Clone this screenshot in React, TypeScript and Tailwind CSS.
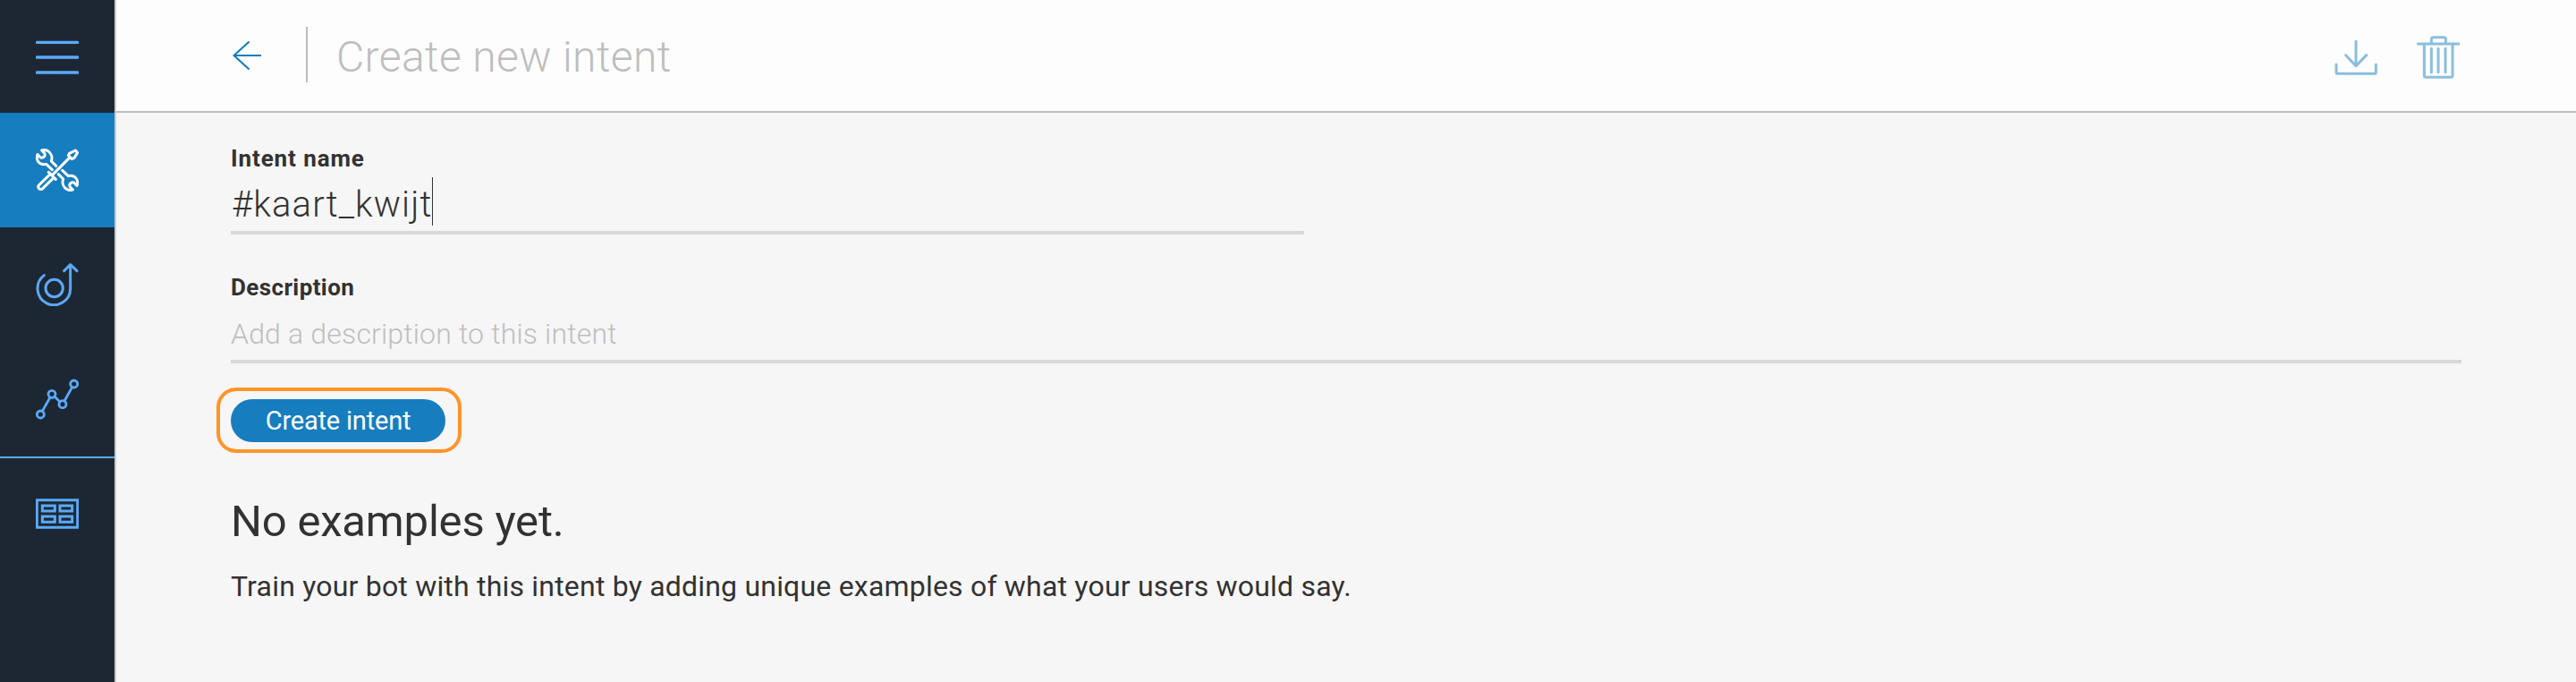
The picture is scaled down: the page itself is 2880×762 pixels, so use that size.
import type { ReactNode } from "react";

function Icon({ viewBox, width = 9, children }: { viewBox: string; width?: number; children: ReactNode }) {
  return (
    <svg
      className="size-12 shrink-0"
      viewBox={viewBox}
      fill="none"
      stroke="currentColor"
      strokeWidth={width}
      strokeLinecap="round"
      strokeLinejoin="round"
    >
      {children}
    </svg>
  );
}

const wrench =
  "M98 88L82 72C87 58 81 44 69 37Q60 33 50 36L59 46Q62 51 59 56Q54 62 46 60L36 50C31 60 34 73 45 80Q54 85 65 82L85 101";

const MenuIcon = () => (
  <Icon viewBox="0 0 144 144" width={10}>
    <path d="M4 22H140M4 72H140M4 123H140" />
  </Icon>
);

const ToolsIcon = () => (
  <Icon viewBox="30 30 144 144">
    <path d={wrench} />
    <path d={wrench} transform="rotate(180 102 102)" />
    <path d="M163 36L170 44L159 61L151 65L139 53L143 46ZM145 59L86 118M73 109L97 133" />
    <path d="M79 115L42 151C33 160 43 171 53 164L90 128" />
  </Icon>
);

const TargetIcon = () => (
  <Icon viewBox="120 132 144 144">
    <circle cx="182" cy="216" r="29" />
    <path d="M148 173A55 55 0 1 0 236 216V138M215 158L236 137L258 158" />
  </Icon>
);

const AnalyticsIcon = () => (
  <Icon viewBox="120 516 144 144" width={8.5}>
    <circle cx="136" cy="639" r="12" />
    <circle cx="174" cy="571" r="12" />
    <circle cx="210" cy="605" r="12" />
    <circle cx="248" cy="537" r="12" />
    <path d="M142 628L168 582M183 579L201 597M216 594L242 548" />
  </Icon>
);

const TableIcon = () => (
  <Icon viewBox="120 150 144 144">
    <g strokeLinejoin="miter">
      <path d="M124 176H260V268H124ZM142 195H184V213H142ZM201 195H242V213H201ZM142 231H184V250H142ZM201 231H242V250H201Z" />
    </g>
  </Icon>
);

const DownloadIcon = () => (
  <Icon viewBox="90 120 144 144">
    <path d="M162 139V221M128 185L162 221L197 185M96 216V242Q96 247 101 247H224Q229 247 229 242V216" />
  </Icon>
);

const TrashIcon = () => (
  <Icon viewBox="366 120 144 144">
    <path d="M370 147H507M415 147V131Q415 125 421 125H457Q463 125 463 131V147M391 147V253Q391 259 397 259H480Q486 259 486 253V147" />
    <path d="M415 163V242M438 163V242M462 163V242" />
  </Icon>
);

export default function App() {
  return (
    <div className="flex h-[762px] w-full overflow-hidden bg-[#f6f6f6] font-[Roboto,sans-serif] text-[#323232]">
      <nav className="flex w-[130px] shrink-0 flex-col border-r-2 border-[#cccccc] bg-[#1d2733] text-[#5aaafa]">
        <button className="flex h-[126px] justify-center pt-10">
          <MenuIcon />
        </button>
        <a className="flex h-32 items-center justify-center bg-[#167dbf] text-white">
          <ToolsIcon />
        </a>
        <a className="flex h-32 items-center justify-center">
          <TargetIcon />
        </a>
        <a className="flex h-32 items-center justify-center">
          <AnalyticsIcon />
        </a>
        <a className="flex h-32 justify-center border-t-2 border-[#5aaafa] pt-[38px]">
          <TableIcon />
        </a>
      </nav>

      <div className="flex min-w-0 flex-1 flex-col">
        <header className="flex h-[126px] shrink-0 items-start border-b-2 border-[#bdbdbd] bg-[#fdfdfd] pr-[130px] pl-[130px]">
          <svg className="mt-[45px] h-[34px] w-[34px] text-[#167dbf]" viewBox="0 0 34 34" fill="none" stroke="currentColor" strokeWidth="2.2">
            <path d="M32 17H1.5M18.6 1.5L1.5 17L18.6 32.5" />
          </svg>
          <div className="mt-[30px] ml-12 h-[62px] w-0.5 bg-[#bdbdbd]" />
          <h1 className="mt-10 ml-8 text-[48px] leading-[48px] font-[330] tracking-[0.4px] whitespace-nowrap text-[#bebebe]">
            Create new intent
          </h1>
          <div className="mt-10 ml-auto flex gap-11 text-[#8abedf]">
            <DownloadIcon />
            <TrashIcon />
          </div>
        </header>

        <main className="flex flex-col items-start pt-9 pr-32 pl-32">
          <label className="text-[26px] leading-[30px] font-bold tracking-[0.9px]">Intent name</label>
          <div className="flex h-[70px] w-[1200px] border-b-4 border-[#d8d8d8] pt-1.5">
            <span className="mt-1 ml-px text-[40px] leading-[54px] font-[330] tracking-[1.1px]">#kaart_kwijt</span>
            <span className="h-[54px] w-px bg-[#323232]" />
          </div>

          <label className="mt-11 text-[26px] leading-[30px] font-bold tracking-[0.4px]">Description</label>
          <div className="h-[70px] w-full border-b-4 border-[#d8d8d8] pt-[17px] text-[32px] leading-10 font-[340] tracking-[0.17px] text-[#bebebe]">
            Add a description to this intent
          </div>

          <div className="mt-[27px] -ml-4 h-[73px] w-[274px] rounded-[22px] border-4 border-[#ff9428] pt-[9px] pl-3">
            <button className="flex h-12 w-60 items-center justify-center rounded-full bg-[#167dbf] text-[29px] leading-8 font-[450] tracking-[-0.2px] text-white">
              Create intent
            </button>
          </div>

          <h2 className="mt-[49px] text-[49px] leading-[56px] tracking-[-0.2px] whitespace-nowrap">No examples yet.</h2>
          <p className="mt-6 text-[32px] leading-10 tracking-[0.2px] whitespace-nowrap">
            Train your bot with this intent by adding unique examples of what your users would say.
          </p>
        </main>
      </div>
    </div>
  );
}
